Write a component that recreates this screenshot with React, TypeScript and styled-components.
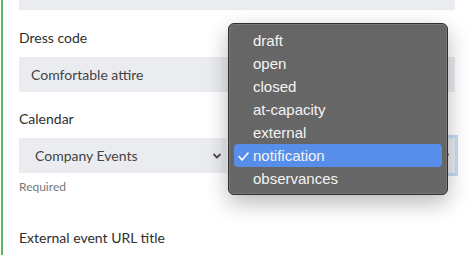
import React from 'react';
import styled, { createGlobalStyle } from 'styled-components';

const GlobalStyle = createGlobalStyle`
  html, body {
    margin: 0;
    padding: 0;
    background: #ffffff;
    overflow: hidden;
  }
  body {
    font-family: Lato, "Open Sans", sans-serif;
  }
`;

const Page = styled.div`
  position: relative;
  width: 471px;
  height: 255px;
  overflow: hidden;
`;

const Panel = styled.div`
  display: flex;
  flex-direction: column;
  margin-left: 1px;
  border-left: 2px solid #5cb85c;
  padding: 0 16px;
  height: 100%;
  box-sizing: border-box;
`;

const Form = styled.div`
  display: flex;
  flex-direction: column;
  margin-top: -25px;
`;

const Field = styled.div<{ $gap?: number }>`
  display: flex;
  flex-direction: column;
  margin-bottom: ${p => p.$gap ?? 18}px;
`;

const Label = styled.div`
  font-size: 14px;
  line-height: 20px;
  color: #2e2e2e;
  margin-bottom: 9px;
`;

const Input = styled.div`
  height: 35px;
  background: #ebecf0;
  display: flex;
  align-items: center;
  padding: 0 12px;
  font-size: 14px;
  color: #444444;
  box-sizing: border-box;
`;

const SelectRow = styled.div`
  display: flex;
  gap: 22px;
`;

const Select = styled.div<{ $width?: number; $focused?: boolean }>`
  height: 35px;
  background: #ebecf0;
  display: flex;
  align-items: center;
  justify-content: space-between;
  padding: 0 4px 0 16px;
  box-sizing: border-box;
  font-size: 14px;
  color: #444444;
  ${p => (p.$width ? `width: ${p.$width}px;` : 'flex: 1;')}
  ${p => (p.$focused ? 'box-shadow: 0 0 0 3px #c6daf6;' : '')}
`;

const Helper = styled.div`
  font-size: 12px;
  line-height: 16px;
  color: #777777;
  margin-top: 6px;
`;

const Menu = styled.div`
  position: absolute;
  left: 228px;
  top: 23px;
  width: 220px;
  box-sizing: border-box;
  background: #666666;
  border: 1px solid #2f2f2f;
  border-radius: 6px;
  box-shadow: 0 8px 22px rgba(0, 0, 0, 0.28), inset 0 0 0 1px rgba(255, 255, 255, 0.12);
  padding: 5px 5px 4px;
  font-family: "Liberation Sans", Arial, sans-serif;
`;

const Option = styled.div<{ $active?: boolean }>`
  position: relative;
  height: 23px;
  display: flex;
  align-items: center;
  padding-left: 19px;
  font-size: 15px;
  color: #f4f4f4;
  border-radius: 4px;
  background: ${p => (p.$active ? '#578ee9' : 'transparent')};
`;

const Check = styled.svg`
  position: absolute;
  left: 4px;
  top: 8px;
`;

const Chevron = () => (
  <svg width="12" height="8" viewBox="0 0 12 8">
    <polyline points="3,2.5 6,5.5 9,2.5" fill="none" stroke="#4a4a4a" strokeWidth="1.8" strokeLinecap="round" strokeLinejoin="round" />
  </svg>
);

const options = ['draft', 'open', 'closed', 'at-capacity', 'external', 'notification', 'observances'];

export default function App() {
  return (
    <Page>
      <GlobalStyle />
      <Panel>
        <Form>
          <Field>
            <Input />
          </Field>
          <Field $gap={17}>
            <Label>Dress code</Label>
            <Input>Comfortable attire</Input>
          </Field>
          <Field $gap={33}>
            <Label>Calendar</Label>
            <SelectRow>
              <Select $width={208}>
                Company Events
                <Chevron />
              </Select>
              <Select $focused>
                <span />
                <Chevron />
              </Select>
            </SelectRow>
            <Helper>Required</Helper>
          </Field>
          <Field>
            <Label>External event URL title</Label>
          </Field>
        </Form>
      </Panel>
      <Menu>
        {options.map(o => (
          <Option key={o} $active={o === 'notification'}>
            {o === 'notification' && (
              <Check width="11" height="9" viewBox="0 0 11 9">
                <polyline points="1,4.5 4,8 10,1" fill="none" stroke="#fff" strokeWidth="1.6" strokeLinecap="round" strokeLinejoin="round" />
              </Check>
            )}
            {o}
          </Option>
        ))}
      </Menu>
    </Page>
  );
}
